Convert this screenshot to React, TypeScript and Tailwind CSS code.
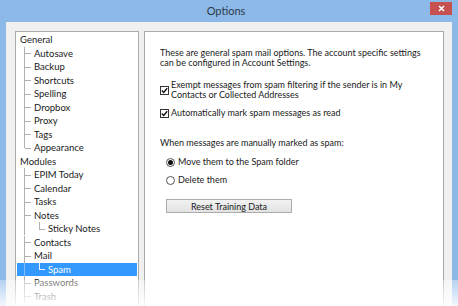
import React from "react";

const FONT = { fontFamily: 'Lato, "Noto Sans", sans-serif' };

type Item = { label: string; level: 0 | 1 | 2; selected?: boolean };

const items: Item[] = [
  { label: "General", level: 0 },
  { label: "Autosave", level: 1 },
  { label: "Backup", level: 1 },
  { label: "Shortcuts", level: 1 },
  { label: "Spelling", level: 1 },
  { label: "Dropbox", level: 1 },
  { label: "Proxy", level: 1 },
  { label: "Tags", level: 1 },
  { label: "Appearance", level: 1 },
  { label: "Modules", level: 0 },
  { label: "EPIM Today", level: 1 },
  { label: "Calendar", level: 1 },
  { label: "Tasks", level: 1 },
  { label: "Notes", level: 1 },
  { label: "Sticky Notes", level: 2 },
  { label: "Contacts", level: 1 },
  { label: "Mail", level: 1 },
  { label: "Spam", level: 2, selected: true },
  { label: "Passwords", level: 1 },
  { label: "Trash", level: 1 },
];

function TreeRow({ item, idx }: { item: Item; idx: number }) {
  const isLastInGeneral = idx === 8;
  return (
    <div className="relative flex h-[13.5px] items-center text-[9.5px] leading-none">
      {item.level === 0 && (
        <span className="pl-[3px] text-[#1a1a1a]">{item.label}</span>
      )}
      {item.level === 1 && (
        <>
          <div className="relative h-full w-[17px] shrink-0">
            <div
              className={`absolute left-[7px] top-0 w-px bg-[#b0b0b0] ${
                isLastInGeneral ? "h-1/2" : "h-full"
              }`}
            />
            <div className="absolute left-[8px] top-1/2 h-px w-[6px] bg-[#b0b0b0]" />
          </div>
          <span className="text-[#1a1a1a]">{item.label}</span>
        </>
      )}
      {item.level === 2 && (
        <div
          className={`flex h-[13px] flex-1 items-center ${
            item.selected ? "bg-[#3399ff] text-white" : "text-[#1a1a1a]"
          }`}
        >
          <div className="relative h-full w-[17px] shrink-0">
            <div
              className={`absolute left-[7px] top-0 h-full w-px ${
                item.selected ? "bg-[#7fbfff]" : "bg-[#b0b0b0]"
              }`}
            />
          </div>
          <div className="relative h-full w-[14px] shrink-0">
            <div
              className={`absolute left-[5px] top-0 h-1/2 w-px ${
                item.selected ? "bg-[#e8f2ff]" : "bg-[#b0b0b0]"
              }`}
            />
            <div
              className={`absolute left-[5px] top-1/2 h-px w-[6px] ${
                item.selected ? "bg-[#e8f2ff]" : "bg-[#b0b0b0]"
              }`}
            />
          </div>
          <span>{item.label}</span>
        </div>
      )}
    </div>
  );
}

function Checkbox() {
  return (
    <div className="flex h-[9px] w-[9px] shrink-0 items-center justify-center border border-[#333] bg-white">
      <svg width="7" height="7" viewBox="0 0 7 7">
        <path d="M0.8 3.6 L2.7 5.5 L6.2 1.3" fill="none" stroke="#111" strokeWidth="1.4" />
      </svg>
    </div>
  );
}

function Radio({ checked }: { checked?: boolean }) {
  return (
    <div className="flex h-[9px] w-[9px] shrink-0 items-center justify-center rounded-full border border-[#555] bg-white">
      {checked && <div className="h-[5px] w-[5px] rounded-full bg-[#111]" />}
    </div>
  );
}

export default function App() {
  return (
    <div
      className="relative h-[306px] w-[458px] overflow-hidden bg-[#8cb9e8]"
      style={FONT}
    >
      {/* title bar */}
      <div className="flex h-[22px] items-start">
        <div className="flex-1" />
        <div className="pt-[4px] text-[11px] leading-[14px] text-[#2f3b4a]">Options</div>
        <div className="flex flex-1 justify-end pr-[6px] pt-[2px]">
          <div className="flex h-[13px] w-[22px] items-center justify-center bg-[#c75050]">
            <svg width="7" height="7" viewBox="0 0 7 7">
              <path d="M1 1 L6 6 M6 1 L1 6" stroke="#fff" strokeWidth="1.6" />
            </svg>
          </div>
        </div>
      </div>

      {/* client */}
      <div className="mx-[6px] flex h-[284px] gap-[5px] bg-[#f0f0f0] pl-[9px] pt-[9px]">
        {/* tree */}
        <div className="h-[300px] w-[124px] shrink-0 border border-[#a9a9a9] bg-white px-[1px] pt-[1px]">
          {items.map((it, i) => (
            <TreeRow key={i} item={it} idx={i} />
          ))}
        </div>

        {/* right panel */}
        <div className="h-[300px] w-[300px] shrink-0 border border-[#a9a9a9] bg-white pl-[15px] pt-[16px] text-[9px] text-[#1a1a1a]">
          <div className="whitespace-nowrap leading-[10px]">
            These are general spam mail options. The account specific settings
            <br />
            can be configured in Account Settings.
          </div>

          <div className="mt-[12px] flex items-center gap-[2px]">
            <Checkbox />
            <div className="whitespace-nowrap leading-[10px]">
              Exempt messages from spam filtering if the sender is in My
              <br />
              Contacts or Collected Addresses
            </div>
          </div>

          <div className="mt-[8px] flex items-center gap-[2px]">
            <Checkbox />
            <div className="whitespace-nowrap leading-[10px]">
              Automatically mark spam messages as read
            </div>
          </div>

          <div className="mt-[20px] whitespace-nowrap leading-[10px]">
            When messages are manually marked as spam:
          </div>

          <div className="mt-[9px] flex items-center gap-[3px] pl-[6px]">
            <Radio checked />
            <div className="whitespace-nowrap leading-[10px]">Move them to the Spam folder</div>
          </div>
          <div className="mt-[8px] flex items-center gap-[3px] pl-[6px]">
            <Radio />
            <div className="whitespace-nowrap leading-[10px]">Delete them</div>
          </div>

          <div className="ml-[6px] mt-[14px] flex h-[14px] w-[126px] items-center justify-center border border-[#acacac] bg-gradient-to-b from-[#f2f2f2] to-[#e2e2e2] leading-none">
            Reset Training Data
          </div>
        </div>
      </div>

      {/* bottom fade overlay */}
      <div className="pointer-events-none absolute bottom-0 left-0 h-[26px] w-full bg-gradient-to-b from-[rgba(255,255,255,0.35)] to-[rgba(255,255,255,0.9)]" />
    </div>
  );
}
